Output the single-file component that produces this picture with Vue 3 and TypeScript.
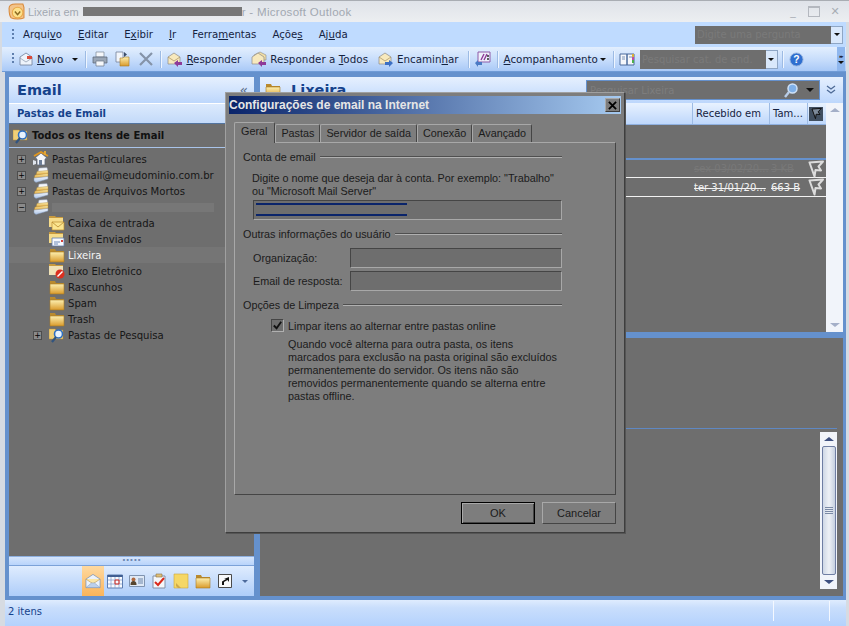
<script setup lang="ts">
interface TreeRow {
  label: string
  icon: string
  level: number
  expander?: string
  selected?: boolean
  masked?: boolean
}

const tree: TreeRow[] = [
  { label: 'Pastas Particulares', icon: 'i-home', level: 0, expander: '+' },
  { label: 'meuemail@meudominio.com.br', icon: 'i-stack', level: 0, expander: '+' },
  { label: 'Pastas de Arquivos Mortos', icon: 'i-stack', level: 0, expander: '+' },
  { label: '', icon: 'i-stack', level: 0, expander: '−', masked: true },
  { label: 'Caixa de entrada', icon: 'i-inbox', level: 1 },
  { label: 'Itens Enviados', icon: 'i-sent', level: 1 },
  { label: 'Lixeira', icon: 'i-folder', level: 1, selected: true },
  { label: 'Lixo Eletrônico', icon: 'i-junk', level: 1 },
  { label: 'Rascunhos', icon: 'i-folder', level: 1 },
  { label: 'Spam', icon: 'i-folder', level: 1 },
  { label: 'Trash', icon: 'i-folder', level: 1 },
  { label: 'Pastas de Pesquisa', icon: 'i-search', level: 1, expander: '+' },
]

const navIcons = ['i-cal', 'i-card', 'i-task', 'i-note', 'i-folder', 'i-link']
const tabs = ['Geral', 'Pastas', 'Servidor de saída', 'Conexão', 'Avançado']
</script>

<template>
  <div class="win">
    <svg class="sprite" width="0" height="0">
      <defs>
        <linearGradient id="gf" x1="0" y1="0" x2="0" y2="1">
          <stop offset="0" stop-color="#fdf0b0" />
          <stop offset="1" stop-color="#d99a2b" />
        </linearGradient>
        <linearGradient id="gb" x1="0" y1="0" x2="0" y2="1">
          <stop offset="0" stop-color="#f4f8fd" />
          <stop offset="1" stop-color="#a9c2e6" />
        </linearGradient>
        <symbol id="i-folder" viewBox="0 0 16 16">
          <path d="M1 2h5l1 2h8v11H1z" fill="#b98a2e" />
          <path d="M1 5h14v10H1z" fill="url(#gf)" stroke="#a97a22" stroke-width=".6" />
        </symbol>
        <symbol id="i-stack" viewBox="0 0 16 16">
          <path d="M6 1l8-.500L15 4 5 5z" fill="#f2f5fa" stroke="#8a94a8" stroke-width=".5" />
          <path d="M4 4.500L15 3.500V7L3 8.500z" fill="url(#gf)" stroke="#b58a30" stroke-width=".4" />
          <path d="M2 8L15 6.500V10L1 11.500z" fill="url(#gf)" stroke="#a97a22" stroke-width=".4" />
          <path d="M1 11l14-1.500V12L3 15.500 1 14z" fill="url(#gb)" stroke="#7f90ad" stroke-width=".5" />
        </symbol>
        <symbol id="i-home" viewBox="0 0 16 16">
          <path d="M2 7l6-5 6 5-2 1v6H4V8z" fill="#f4f6fa" stroke="#5e6878" stroke-width=".8" />
          <path d="M1 5l7-4 7 4" fill="none" stroke="#e0961f" stroke-width="1.800" />
          <path d="M11 0h2v4h-2z" fill="#e0a63a" />
          <path d="M6 9h3v5H6z" fill="#6d7e98" />
          <path d="M0 9l3 1v3l-3 1z" fill="#dfe4ec" />
        </symbol>
        <symbol id="i-inbox" viewBox="0 0 16 16">
          <path d="M0 1h6l1 1h7v10H0z" fill="#c89a3e" />
          <path d="M0 3h14v9H0z" fill="#f6dc8a" />
          <path d="M3 7h12v8H3z" fill="#fbe58f" stroke="#b98a2e" stroke-width=".7" />
          <path d="M3 7l6 5 6-5" fill="none" stroke="#b98a2e" stroke-width=".8" />
        </symbol>
        <symbol id="i-sent" viewBox="0 0 16 16">
          <path d="M0 1h6l1 1h7v10H0z" fill="#c89a3e" />
          <path d="M0 3h14v9H0z" fill="#f6dc8a" />
          <path d="M3 7h12v8H3z" fill="#f7f9fd" stroke="#607ba8" stroke-width=".8" />
          <path d="M5 11h6M5 13h4" stroke="#6d8ab8" stroke-width="1" />
          <path d="M12 9h2v2h-2z" fill="#d8413a" />
        </symbol>
        <symbol id="i-junk" viewBox="0 0 16 16">
          <path d="M0 1h6l1 1h7v10H0z" fill="#c89a3e" />
          <path d="M0 3h14v9H0z" fill="#f0e2b8" />
          <circle cx="11" cy="11" r="4.500" fill="#dc2f1f" />
          <path d="M8.500 13.500l5-5" stroke="#fff" stroke-width="1.400" />
        </symbol>
        <symbol id="i-search" viewBox="0 0 16 16">
          <path d="M0 2h6l1 1h7v9H0z" fill="#f0cf78" stroke="#b98a2e" stroke-width=".5" />
          <circle cx="9.500" cy="7" r="4" fill="#e7f2fd" stroke="#2f6fc0" stroke-width="1.600" />
          <path d="M7 10l-4 5" stroke="#31547f" stroke-width="2.200" />
        </symbol>
        <symbol id="i-mail" viewBox="0 0 17 16">
          <path d="M1 6l7.500-5L16 6v9H1z" fill="#ecf2fb" stroke="#6b86ad" stroke-width=".7" />
          <path d="M1 6l7.500 5L16 6" fill="#fbe6a6" stroke="#b58d3e" stroke-width=".6" />
          <path d="M1 15l6-5h3l6 5z" fill="#bcd0ec" stroke="#7f98bd" stroke-width=".5" />
        </symbol>
        <symbol id="i-cal" viewBox="0 0 16 16">
          <path d="M.5 2h15v13H.5z" fill="#f8fbff" stroke="#5d7db0" />
          <path d="M.5 2h15v2H.5z" fill="#405f92" />
          <path d="M4 4v11M8 4v11M12 4v11M1 7h14M1 11h14" stroke="#7d9ac8" stroke-width=".7" />
          <path d="M8 7h4v4H8z" fill="none" stroke="#dc2f1f" />
        </symbol>
        <symbol id="i-card" viewBox="0 0 16 16">
          <path d="M.5 2.500h15v11H.5z" fill="#dfe9f6" stroke="#7f93b0" />
          <circle cx="4.500" cy="6.500" r="2" fill="#b06a40" />
          <path d="M1.500 12c0-3 1-4 3-4s3 1 3 4z" fill="#56452f" />
          <path d="M9 6h5M9 8h5M9 10h5" stroke="#6d86aa" />
        </symbol>
        <symbol id="i-task" viewBox="0 0 16 16">
          <path d="M2 3h12v12H2z" fill="#f5f7fb" stroke="#8391a8" />
          <path d="M5 1h6v3H5z" fill="#e0c07a" stroke="#8a7140" stroke-width=".6" />
          <path d="M4 9l3 3 6-7" fill="none" stroke="#d9291c" stroke-width="2" />
        </symbol>
        <symbol id="i-note" viewBox="0 0 16 16">
          <path d="M1 1h14v14H1z" fill="#f5d766" stroke="#c9a53e" stroke-width=".6" />
          <path d="M3 10l5 5h-3l-2-2z" fill="#cfa94a" />
        </symbol>
        <symbol id="i-link" viewBox="0 0 16 16">
          <path d="M1.500 1.500h13v13h-13z" fill="#f7f8fa" stroke="#4a4a4a" />
          <path d="M5 12V8.500l4-2.500H7l5-2v5l-1.500-2L7 9v3z" fill="#111" />
        </symbol>
        <symbol id="i-new" viewBox="0 0 16 16">
          <path d="M2 6l6-4 6 4v8H2z" fill="#eef3fb" stroke="#6f7f99" stroke-width=".8" />
          <path d="M2 7l6 4 6-4" fill="none" stroke="#8a97ab" stroke-width=".7" />
          <path d="M9 5h5v3H9z" fill="#d84a3a" />
        </symbol>
        <symbol id="i-print" viewBox="0 0 16 16">
          <path d="M4 1h8v5H4z" fill="#f5f7fa" stroke="#7b8797" stroke-width=".7" />
          <path d="M1 6h14v6H1z" fill="#9aa6b6" stroke="#566274" stroke-width=".7" />
          <path d="M4 10h8v5H4z" fill="#f5f7fa" stroke="#6a7686" stroke-width=".7" />
        </symbol>
        <symbol id="i-move" viewBox="0 0 16 16">
          <path d="M2 1h7v10H2z" fill="#f2f5fa" stroke="#75829a" stroke-width=".8" />
          <path d="M6 7h3l1-1h5v9H6z" fill="url(#gf)" stroke="#a97a22" stroke-width=".6" />
          <path d="M10 1l3 2.500L10 6z" fill="#3a4c68" />
        </symbol>
        <symbol id="i-reply" viewBox="0 0 16 16">
          <path d="M1 6l6-4 6 4v7H1z" fill="#f7e9bd" stroke="#8c8a86" stroke-width=".7" />
          <path d="M1 6l6 4 6-4" fill="none" stroke="#a79160" stroke-width=".7" />
          <path d="M7 12l4-3v2h4v3h-4v2z" fill="#8e3a98" />
        </symbol>
        <symbol id="i-replyall" viewBox="0 0 16 16">
          <path d="M3 4l6-3 6 3v5H3z" fill="#f2dfa5" stroke="#8c8a86" stroke-width=".6" />
          <path d="M1 6l6-4 6 4v7H1z" fill="#f7e9bd" stroke="#8c8a86" stroke-width=".7" />
          <path d="M7 12l4-3v2h4v3h-4v2z" fill="#8e3a98" />
        </symbol>
        <symbol id="i-fwd" viewBox="0 0 16 16">
          <path d="M1 6l6-4 6 4v7H1z" fill="#f7e9bd" stroke="#8c8a86" stroke-width=".7" />
          <path d="M1 6l6 4 6-4" fill="none" stroke="#a79160" stroke-width=".7" />
          <path d="M15 12l-4-3v2H7v3h4v2z" fill="#3b6fc4" />
        </symbol>
        <symbol id="i-rules" viewBox="0 0 16 16">
          <path d="M3 1h12v10H3z" fill="#eef0fb" stroke="#8d5aa8" />
          <path d="M6 9l3-6M9 9l3-6" stroke="#8e3a98" stroke-width="1.400" />
          <path d="M13 4v2M13 7v2" stroke="#222" stroke-width="1.400" />
          <path d="M0 12l3-3v2h4v3H3v2z" fill="#4a7ac4" />
        </symbol>
        <symbol id="i-book" viewBox="0 0 16 16">
          <path d="M1 3h7v11H1zM8 3h7v11H8z" fill="#f5f7fb" stroke="#4b6a9c" />
          <path d="M3 6h3M3 8h3M10 6h3" stroke="#7d93b5" />
          <path d="M13 3h2v3h-2z" fill="#d9b13a" />
          <path d="M13 6h2v3h-2z" fill="#bc4ea6" />
          <path d="M13 9h2v3h-2z" fill="#4cae4c" />
        </symbol>
        <symbol id="i-flag" viewBox="0 0 16 18">
          <path d="M1.500 2.500L15 1.500 10.500 6.500 13 10.500 7.500 10 6.500 16.500z" fill="none" stroke="#dcdcdc" stroke-width="2" stroke-linejoin="round" />
        </symbol>
      </defs>
    </svg>

    <header class="titlebar">
      <svg class="logo" viewBox="0 0 16 16" width="17" height="17">
        <path d="M1 5c0-3 3-4 6-4h7l1 3v10c-3 1.500-9 1.500-12 0C1 12 1 8 1 5z" fill="#f3c48a" stroke="#d98a3a" />
        <circle cx="9" cy="9" r="5" fill="#fde28c" stroke="#e8a94a" />
        <path d="M6.500 8l2.500 3 2.500-3" fill="none" stroke="#8a6a20" stroke-width="1.400" />
      </svg>
      <span class="title-text first-part">Lixeira em</span>
      <span class="mask-title"></span>
      <span class="title-text last-part">r - Microsoft Outlook</span>
      <span class="spacer"></span>
      <span class="winbtn">_</span>
      <span class="winbtn box"></span>
      <span class="winbtn cross">✕</span>
    </header>

    <nav class="menubar">
      <span class="grip"></span>
      <span class="menu-item">Arqui<u>v</u>o</span>
      <span class="menu-item"><u>E</u>ditar</span>
      <span class="menu-item">E<u>x</u>ibir</span>
      <span class="menu-item"><u>I</u>r</span>
      <span class="menu-item">Ferra<u>m</u>entas</span>
      <span class="menu-item">Açõe<u>s</u></span>
      <span class="menu-item">Aj<u>u</u>da</span>
      <span class="spacer"></span>
      <div class="ask">Digite uma pergunta</div>
      <span class="combo-btn"><i class="tri"></i></span>
    </nav>

    <div class="toolbar">
      <span class="grip"></span>
      <svg class="ic first"><use href="#i-new" /></svg>
      <span class="tb-text novo"><u>N</u>ovo</span>
      <i class="tri novo-arrow"></i>
      <span class="sep sep-a"></span>
      <svg class="ic"><use href="#i-print" /></svg>
      <svg class="ic move"><use href="#i-move" /></svg>
      <svg class="del" viewBox="0 0 14 14" width="14" height="14">
        <path d="M1 1l12 12M13 1L1 13" stroke="#8593a8" stroke-width="2.200" />
      </svg>
      <span class="sep sep-b"></span>
      <svg class="ic"><use href="#i-reply" /></svg>
      <span class="tb-text resp"><u>R</u>esponder</span>
      <svg class="ic"><use href="#i-replyall" /></svg>
      <span class="tb-text todos">Responder a <u>T</u>odos</span>
      <svg class="ic"><use href="#i-fwd" /></svg>
      <span class="tb-text enc">Encamin<u>h</u>ar</span>
      <span class="sep sep-c"></span>
      <svg class="ic"><use href="#i-rules" /></svg>
      <span class="sep sep-d"></span>
      <span class="tb-text"><u>A</u>companhamento</span>
      <i class="tri acomp-arrow"></i>
      <span class="sep sep-e"></span>
      <svg class="ic"><use href="#i-book" /></svg>
      <div class="addr">Pesquisar cat. de end.</div>
      <span class="combo-btn addr-btn"><i class="tri"></i></span>
      <span class="sep sep-f"></span>
      <svg class="help" viewBox="0 0 16 16" width="15" height="15">
        <circle cx="8" cy="8" r="7" fill="#2f6fd0" stroke="#9cb8e0" />
        <text x="8" y="12" text-anchor="middle" font-size="11" font-weight="700" fill="#fff" font-family="Liberation Sans">?</text>
      </svg>
      <span class="spacer"></span>
      <span class="overflow"><b>▸▸</b><i class="tri"></i></span>
    </div>

    <main class="frame">
      <aside class="left">
        <div class="pane-head">
          <span class="pane-title">Email</span>
          <span class="collapse">«</span>
        </div>
        <div class="sub-head">Pastas de Email</div>
        <div class="all-items">
          <svg class="ic"><use href="#i-search" /></svg>
          <span>Todos os Itens de Email</span>
        </div>
        <ul class="tree">
          <li
            v-for="row in tree"
            :key="row.label + row.icon"
            class="tree-row"
            :class="{ selected: row.selected, sub: row.level === 1 }"
          >
            <span class="expander" :class="{ empty: !row.expander }">{{ row.expander }}</span>
            <svg class="ic"><use :href="'#' + row.icon" /></svg>
            <span v-if="row.masked" class="mask-tree"></span>
            <span v-else class="tree-label">{{ row.label }}</span>
          </li>
        </ul>
        <div class="splitter"><span>·····</span></div>
        <div class="navbar">
          <span class="nav-on"><svg class="ic mail"><use href="#i-mail" /></svg></span>
          <svg v-for="n in navIcons" :key="n" class="ic nav-ic"><use :href="'#' + n" /></svg>
          <i class="tri nav-arrow"></i>
        </div>
      </aside>

      <section class="right">
        <div class="pane-head folder-head">
          <svg class="ic big"><use href="#i-folder" /></svg>
          <span class="pane-title lix">Lixeira</span>
          <span class="spacer"></span>
          <div class="find">
            <span>Pesquisar Lixeira</span>
            <span class="spacer"></span>
            <svg viewBox="0 0 16 16" width="16" height="16">
              <circle cx="9.500" cy="6.500" r="4.500" fill="#7fb0e8" stroke="#cfe2f8" stroke-width="1.500" />
              <path d="M6 10l-4 5" stroke="#b8cce6" stroke-width="2.400" />
            </svg>
            <i class="tri find-arrow"></i>
          </div>
          <svg class="chev" viewBox="0 0 10 10" width="10" height="10">
            <path d="M1 1l4 3 4-3M1 5l4 3 4-3" fill="none" stroke="#4d6a96" stroke-width="1.300" />
          </svg>
        </div>
        <div class="list-wrap">
          <div class="list">
            <div class="cols">
              <span class="spacer"></span>
              <span class="col recv">Recebido em</span>
              <span class="col size">Tam...</span>
              <span class="col flagcol">
                <span class="flag-box">
                  <svg viewBox="0 0 16 18" width="11" height="13"><path d="M1.500 2.500L15 1.500 10.500 6.500 13 10.500 7.500 10 6.500 16.500z" fill="#7d8a9a" stroke="#0c0c0c" stroke-width="1.400" /></svg>
                </span>
              </span>
            </div>
            <div class="list-body">
              <div class="mail-row dim">
                <span class="m-date">sex 03/02/20...</span>
                <span class="m-size">3 KB</span>
                <svg class="m-flag"><use href="#i-flag" /></svg>
              </div>
              <div class="mail-row">
                <span class="m-date">ter 31/01/20...</span>
                <span class="m-size">663 B</span>
                <svg class="m-flag"><use href="#i-flag" /></svg>
              </div>
            </div>
          </div>
          <div class="vbar light">
            <span class="arrow-up pale"></span>
            <span class="spacer"></span>
            <span class="arrow-down pale"></span>
          </div>
        </div>
        <div class="reading">
          <div class="read-head"></div>
          <div class="read-body">
            <div class="vbar">
              <span class="arrow-up"></span>
              <div class="thumb"><span></span></div>
              <span class="arrow-down"></span>
            </div>
          </div>
        </div>
      </section>
    </main>

    <footer class="status">
      <span>2 itens</span>
      <span class="spacer"></span>
      <span class="st-sep"></span>
      <span class="st-sep last"></span>
    </footer>

    <div class="dialog">
      <div class="dlg-title">
        <span>Configurações de email na Internet</span>
        <span class="dlg-close">
          <svg viewBox="0 0 10 10" width="9" height="9"><path d="M1 1l8 8M9 1L1 9" stroke="#000" stroke-width="2" /></svg>
        </span>
      </div>
      <div class="tabs">
        <span v-for="(t, i) in tabs" :key="t" class="tab" :class="{ active: i === 0 }">{{ t }}</span>
      </div>
      <div class="panel">
        <div class="group-title"><span>Conta de email</span><i></i></div>
        <p class="hint">Digite o nome que deseja dar à conta. Por exemplo: "Trabalho"<br />ou "Microsoft Mail Server"</p>
        <div class="input account"><span class="sel"></span></div>
        <div class="group-title second"><span>Outras informações do usuário</span><i></i></div>
        <div class="field first-field"><label>Organização:</label><div class="input"></div></div>
        <div class="field"><label>Email de resposta:</label><div class="input"></div></div>
        <div class="group-title third"><span>Opções de Limpeza</span><i></i></div>
        <div class="check-row">
          <span class="check">
            <svg viewBox="0 0 12 12" width="11" height="11"><path d="M2 6l3 3 5-7" fill="none" stroke="#111" stroke-width="2" /></svg>
          </span>
          <span>Limpar itens ao alternar entre pastas online</span>
        </div>
        <p class="desc">
          Quando você alterna para outra pasta, os itens<br />
          marcados para exclusão na pasta original são excluídos<br />
          permanentemente do servidor. Os itens não são<br />
          removidos permanentemente quando se alterna entre<br />
          pastas offline.
        </p>
      </div>
      <div class="buttons">
        <button class="btn default" type="button">OK</button>
        <button class="btn" type="button">Cancelar</button>
      </div>
    </div>
  </div>
</template>

<style scoped>
.win {
  position: relative;
  width: 849px;
  height: 626px;
  overflow: hidden;
  display: flex;
  flex-direction: column;
  background: #d6dbe2;
  font-family: "DejaVu Sans", sans-serif;
  font-size: 10px;
  color: #1b1b1b;
}
.sprite { position: absolute; }
.spacer { flex: 1; }
.ic { width: 16px; height: 16px; flex: none; display: block; }

.titlebar {
  height: 22px;
  flex: none;
  display: flex;
  align-items: center;
  padding: 0 5px 0 8px;
  background: linear-gradient(#dfe3e9, #eceef1);
  border-top: 1px solid #a9adb3;
  box-sizing: border-box;
}
.logo { margin-right: 3px; }
.title-text { color: #a2a8b1; font-family: "Liberation Sans", sans-serif; font-size: 11.500px; white-space: pre; }
.first-part { font-size: 11px; }
.last-part { letter-spacing: .3px; }
.mask-title { width: 159px; height: 9px; margin: 0 0 0 4px; background: #777; }
.winbtn { width: 18px; text-align: center; color: #a8adb4; font-size: 11px; }
.winbtn.box { width: 10px; height: 8px; margin: 0 6px; border: 1px solid #b4b8bf; border-top-width: 2px; }
.winbtn.cross { font-size: 11px; color: #a8adb4; }

.menubar {
  height: 25px;
  flex: none;
  display: flex;
  align-items: center;
  margin: 0 3px 0 2px;
  padding-right: 3px;
  background: #bfdbff;
  color: #15233f;
}
.grip {
  width: 2px;
  height: 12px;
  margin: 0 0 0 10px;
  background: repeating-linear-gradient(#5f7fae 0 2px, transparent 2px 4px);
}
.menu-item { margin-left: 16px; font-size: 10.200px; }
.menu-item:first-of-type { margin-left: 0; }
.menubar .grip + .menu-item { margin-left: 9px; }
.ask {
  width: 136px;
  height: 18px;
  line-height: 18px;
  background: #6e6e6e;
  color: #7a7a7a;
  padding-left: 2px;
  box-sizing: border-box;
}
.combo-btn {
  width: 12px;
  height: 18px;
  flex: none;
  display: flex;
  align-items: center;
  justify-content: center;
  background: #d9e8fb;
  box-sizing: border-box;
  border: 1px solid #8ea6c5;
  border-left: 0;
}
.tri {
  display: block;
  width: 0;
  height: 0;
  border: 3px solid transparent;
  border-top: 3px solid #111;
  border-bottom: 0;
}

.toolbar {
  height: 25px;
  flex: none;
  display: flex;
  align-items: center;
  margin: 0 3px 0 2px;
  padding-right: 1px;
  background: linear-gradient(#e3effe, #c6dcfb 55%, #a9c9f7);
  border-bottom: 1px solid #6f9bd6;
  box-sizing: border-box;
  color: #15233f;
}
.toolbar .first { margin-left: 4px; }
.tb-text { font-size: 10.300px; white-space: nowrap; }
.novo { margin-left: 3px; }
.novo-arrow { margin-left: 9px; }
.sep { width: 1px; height: 17px; background: #9dbbe4; box-shadow: 1px 0 #eef5ff; flex: none; }
.sep-a { margin: 0 6px 0 7px; }
.move { margin-left: 6px; }
.del { margin-left: 9px; flex: none; }
.sep-b { margin: 0 6px 0 7px; }
.resp { margin: 0 10px 0 3px; }
.todos { margin: 0 10px 0 3px; letter-spacing: .06px; }
.enc { margin-left: 3px; }
.sep-c { margin: 0 6px 0 9px; }
.sep-d { margin: 0 6px; }
.acomp-arrow { margin-left: 2px; }
.sep-e { margin: 0 5px 0 7px; }
.addr {
  width: 126px;
  height: 19px;
  margin-left: 5px;
  line-height: 19px;
  padding-left: 2px;
  box-sizing: border-box;
  background: #6e6e6e;
  color: #7a7a7a;
}
.addr-btn { height: 19px; }
.sep-f { margin: 0 6px 0 4px; }
.help { flex: none; }
.overflow {
  width: 8px;
  height: 24px;
  display: flex;
  flex-direction: column;
  align-items: center;
  justify-content: center;
  gap: 2px;
  background: #8fb7ee;
}
.overflow b { font-size: 5px; line-height: 5px; letter-spacing: -1px; color: #223; }

.frame {
  height: 528px;
  flex: none;
  display: flex;
  gap: 6px;
  margin: 0 3px 0 5px;
  padding: 5px 3px 4px 4px;
  background: #6591cd;
  box-sizing: border-box;
}
.left { width: 245px; flex: none; display: flex; flex-direction: column; }
.right { flex: 1; min-width: 0; display: flex; flex-direction: column; }
.pane-head {
  height: 26px;
  flex: none;
  display: flex;
  align-items: center;
  padding: 0 6px 0 8px;
  background: linear-gradient(#e6f0fe, #bdd7fc);
  box-sizing: border-box;
}
.pane-title { font-size: 14.500px; font-weight: 700; color: #15428b; }
.collapse { margin-left: auto; font-size: 14px; color: #5b6d88; }
.sub-head {
  height: 20px;
  flex: none;
  line-height: 19px;
  padding-left: 8px;
  box-sizing: border-box;
  border-top: 1px solid #fff;
  background: linear-gradient(#dceafd, #c3daf9);
  color: #15428b;
  font-weight: 700;
  font-size: 10px;
}
.all-items {
  height: 25px;
  flex: none;
  display: flex;
  align-items: center;
  gap: 3px;
  padding-left: 4px;
  background: #6e6e6e;
  font-weight: 700;
  color: #111;
  border-top: 1px solid #53749f;
  border-bottom: 1px solid #a9c4ea;
  box-sizing: border-box;
}
.tree {
  flex: 1;
  margin: 0;
  padding: 3px 0 0;
  list-style: none;
  background: #6e6e6e;
}
.tree-row {
  height: 16px;
  display: flex;
  align-items: center;
  padding-left: 8px;
  color: #161616;
  font-size: 10.100px;
  white-space: nowrap;
}
.tree-row.selected { background: #757575; color: #f4f4f4; }
.expander {
  width: 7px;
  height: 7px;
  margin-right: 7px;
  flex: none;
  display: flex;
  align-items: center;
  justify-content: center;
  font-size: 8px;
  line-height: 7px;
  border: 1px solid #4d4d4d;
  background: #8a8a8a;
  color: #000;
}
.expander.empty { visibility: hidden; }
.tree-label { margin-left: 3px; }
.sub { padding-left: 24px; }
.mask-tree { width: 162px; height: 9px; margin-left: 3px; background: #777; }
.splitter {
  height: 10px;
  flex: none;
  display: flex;
  align-items: center;
  justify-content: center;
  background: linear-gradient(#d5e5fc, #b9d4fb);
  border-top: 1px solid #8eb0e0;
  border-bottom: 1px solid #7ca2d8;
  box-sizing: border-box;
  color: #6e89b4;
  font-weight: 700;
  font-size: 10px;
  line-height: 6px;
}
.navbar {
  height: 30px;
  flex: none;
  display: flex;
  align-items: center;
  padding-left: 73px;
  background: linear-gradient(#dfecfe, #aecdf9);
}
.nav-on {
  width: 22px;
  height: 30px;
  flex: none;
  display: flex;
  align-items: center;
  justify-content: center;
  background: linear-gradient(#fed9a0, #fbb45a);
}
.nav-ic { margin-left: 6px; }
.nav-on + .nav-ic { margin-left: 3px; }
.nav-arrow { margin-left: 9px; border-top-color: #4c6a9c; }

.folder-head { padding-left: 5px; padding-right: 7px; }
.big { width: 16px; height: 16px; }
.lix { margin-left: 10px; }
.find {
  width: 234px;
  height: 20px;
  display: flex;
  align-items: center;
  padding: 0 5px 0 3px;
  box-sizing: border-box;
  border: 1px solid #6591cd;
  background: #6e6e6e;
  color: #7d7d7d;
}
.find-arrow { margin-left: 7px; border-width: 4px; border-top-color: #111; border-bottom: 0; }
.chev { margin-left: 6px; flex: none; }

.list-wrap { height: 229px; flex: none; display: flex; }
.list { flex: 1; min-width: 0; display: flex; flex-direction: column; }
.cols {
  height: 22px;
  flex: none;
  display: flex;
  align-items: stretch;
  background: linear-gradient(#e8f2ff, #bed7fb);
  border-bottom: 1px solid #8fb0e0;
  box-sizing: border-box;
  color: #15233f;
}
.col { display: flex; align-items: center; border-left: 1px solid #9dbbe4; padding-left: 3px; box-sizing: border-box; }
.recv { width: 77px; }
.size { width: 38px; }
.flagcol { width: 19px; padding-left: 1px; }
.flag-box {
  width: 14px;
  height: 14px;
  display: flex;
  align-items: center;
  justify-content: center;
  background: #414f60;
}
.list-body { flex: 1; padding-top: 33px; background: #6e6e6e; }
.mail-row {
  height: 19px;
  display: flex;
  align-items: center;
  box-sizing: border-box;
  border-top: 1px solid #f2f2f2;
  color: #f2f2f2;
  font-size: 10px;
  text-decoration: line-through;
}
.mail-row:last-child { border-bottom: 1px solid #f2f2f2; height: 20px; }
.mail-row.dim { border-top: 2px solid #6591cd; color: #787878; }
.m-date { margin-left: 434px; width: 77px; white-space: nowrap; }
.m-size { width: 37px; white-space: nowrap; }
.m-flag { width: 16px; height: 18px; flex: none; }
.vbar {
  width: 17px;
  flex: none;
  display: flex;
  flex-direction: column;
  align-items: center;
  box-sizing: border-box;
  background: #f1f4fa;
}
.arrow-up, .arrow-down {
  display: block;
  margin: 5px 0;
  width: 0;
  height: 0;
  border: 5px solid transparent;
  border-bottom: 4px solid #3d4f7f;
  border-top: 0;
}
.arrow-down { border-top: 4px solid #3d4f7f; border-bottom: 0; }
.pale { border-bottom-color: #a4afc8; border-top-color: #a4afc8; }
.reading {
  flex: 1;
  margin-top: 6px;
  display: flex;
  flex-direction: column;
  background: #6e6e6e;
  min-height: 0;
}
.read-head { height: 90px; flex: none; border-bottom: 1px solid #5f88c3; margin-right: 6px; }
.read-body {
  flex: 1;
  display: flex;
  justify-content: flex-end;
  padding: 3px 6px 7px 0;
  min-height: 0;
}
.thumb {
  flex: 1;
  width: 14px;
  display: flex;
  align-items: center;
  justify-content: center;
  box-sizing: border-box;
  border: 1px solid #6f7ea3;
  border-radius: 2px;
  background: linear-gradient(90deg, #cfd8e6, #eef1f6 50%, #c6d0e0);
}
.thumb span {
  width: 8px;
  height: 7px;
  background: repeating-linear-gradient(#7b8aa5 0 1px, transparent 1px 2px);
}

.status {
  flex: 1;
  display: flex;
  align-items: center;
  margin: 0 3px 0 5px;
  padding: 0 0 4px 3px;
  background: linear-gradient(#dfecfe 0, #c9defc 30%, #b4d2fd);
  color: #15428b;
}
.st-sep { width: 1px; height: 20px; background: #f4f8ff; margin-right: 55px; }
.st-sep.last { margin-right: 16px; }

.dialog {
  position: absolute;
  left: 225px;
  top: 92px;
  width: 400px;
  height: 441px;
  box-sizing: border-box;
  padding: 3px 4px 0;
  display: flex;
  flex-direction: column;
  background: #7d7d7d;
  border: 1px solid #a0a0a0;
  border-right-color: #3e3e3e;
  border-bottom-color: #3e3e3e;
  box-shadow: 1px 1px 0 #555;
  font-family: "Liberation Sans", sans-serif;
}
.dlg-title {
  height: 18px;
  flex: none;
  display: flex;
  align-items: center;
  justify-content: space-between;
  padding: 0 1px 0 0;
  background: linear-gradient(90deg, #0a246a, #a6caf0);
  color: #e6e6e6;
  font-weight: 700;
  font-size: 12px;
  margin: 0 -1px 0 -1px;
}
.dlg-close {
  width: 15px;
  height: 14px;
  display: flex;
  align-items: center;
  justify-content: center;
  background: #7d7d7d;
  border: 1px solid;
  border-color: #a9a9a9 #3e3e3e #3e3e3e #a9a9a9;
  box-sizing: border-box;
}
.tabs {
  height: 20px;
  margin: 8px 0 0 4px;
  display: flex;
  align-items: flex-end;
  flex: none;
  position: relative;
  z-index: 1;
}
.tab {
  height: 18px;
  line-height: 16px;
  padding: 0 5px;
  box-sizing: border-box;
  border: 1px solid #a8a8a8;
  border-right-color: #454545;
  border-bottom: 0;
  border-radius: 2px 2px 0 0;
  font-size: 10.800px;
  white-space: nowrap;
}
.tab.active { height: 21px; margin-bottom: -1px; line-height: 17px; padding: 0 7px 0 6px; background: #7d7d7d; margin-left: 0; }
.panel {
  height: 353px;
  flex: none;
  margin: 0 4px 0 4px;
  padding: 7px 0 0 8px;
  box-sizing: border-box;
  border: 1px solid;
  border-color: #a8a8a8 #454545 #454545 #a8a8a8;
  font-size: 10.800px;
}
.group-title { height: 13px; display: flex; align-items: center; gap: 4px; width: 319px; }
.group-title i { flex: 1; height: 1px; background: #4f4f4f; border-bottom: 1px solid #b0b0b0; }
.hint { margin: 9px 0 0 9px; line-height: 13px; white-space: nowrap; }
.input {
  height: 20px;
  box-sizing: border-box;
  background: #6e6e6e;
  border: 1px solid;
  border-color: #454545 #a8a8a8 #a8a8a8 #454545;
}
.account { width: 309px; margin: 2px 0 0 10px; padding: 2px 2px; }
.sel {
  display: block;
  width: 151px;
  height: 13px;
  border-top: 2px solid #0a246a;
  border-bottom: 2px solid #0a246a;
  box-sizing: border-box;
}
.second { margin-top: 7px; }
.field { display: flex; align-items: center; margin: 3px 0 0 10px; width: 309px; }
.first-field { margin-top: 8px; }
.field label { width: 97px; flex: none; white-space: nowrap; }
.field .input { flex: 1; }
.third { margin-top: 7px; }
.check-row { display: flex; align-items: center; margin: 8px 0 0 28px; gap: 4px; white-space: nowrap; }
.check {
  width: 13px;
  height: 13px;
  flex: none;
  display: flex;
  align-items: center;
  justify-content: center;
  box-sizing: border-box;
  background: #6e6e6e;
  border: 1px solid;
  border-color: #454545 #b0b0b0 #b0b0b0 #454545;
}
.desc { margin: 6px 0 0 45px; line-height: 13px; white-space: nowrap; }
.buttons { display: flex; justify-content: flex-end; gap: 7px; margin: 7px 4px 0 0; }
.btn {
  width: 74px;
  height: 22px;
  padding: 0;
  font: inherit;
  font-size: 11px;
  color: #1b1b1b;
  background: #7d7d7d;
  border: 1px solid;
  border-color: #a8a8a8 #454545 #454545 #a8a8a8;
}
.btn.default { outline: 1px solid #000; outline-offset: -1px; border: 1px solid #000; box-shadow: inset 1px 1px #a8a8a8, inset -1px -1px #454545; }
</style>

<style>
html, body { margin: 0; overflow: hidden; }
</style>
